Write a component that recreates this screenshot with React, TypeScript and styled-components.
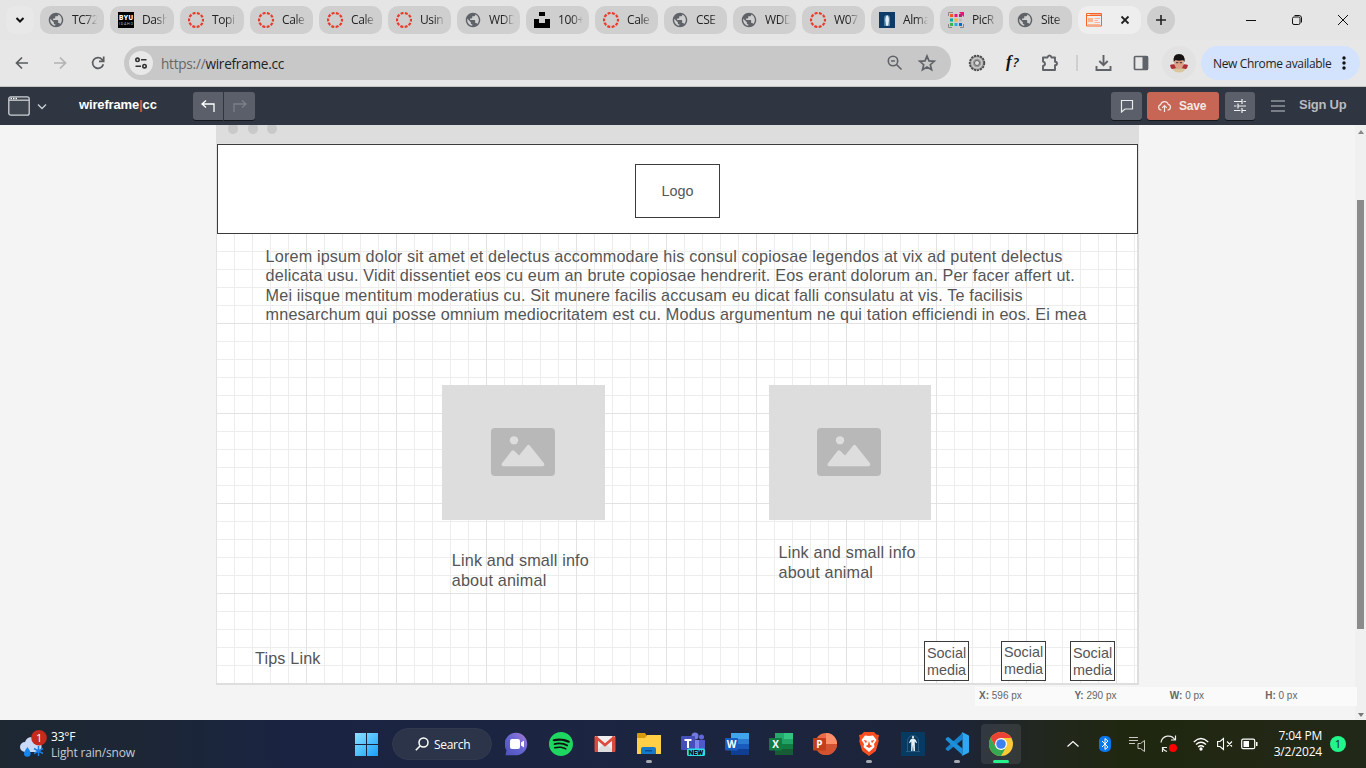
import React from "react";
import styled, { createGlobalStyle } from "styled-components";
import { SiSpotify } from "react-icons/si";

const Global = createGlobalStyle`
  * { box-sizing: border-box; }
  body { margin: 0; overflow: hidden; font-family: "Open Sans", sans-serif; }
  svg { display: block; flex: none; }
`;

const Screen = styled.div`
  width: 1366px;
  height: 768px;
  display: flex;
  flex-direction: column;
  overflow: hidden;
  background: #f4f4f4;
`;

/* ---------- browser tabs ---------- */
const TabStrip = styled.div`
  height: 40px;
  flex: none;
  display: flex;
  align-items: flex-start;
  padding: 6px 0 0 6px;
  background: #e5e5e5;
`;
const TabSearch = styled.div`
  width: 28px;
  height: 28px;
  border-radius: 9px;
  margin-right: 6px;
  background: #e8e8e8;
  display: grid;
  place-items: center;
`;
const Tab = styled.div<{ $active?: boolean; $wide?: boolean }>`
  width: ${(p) => (p.$wide ? 64 : 63)}px;
  height: 28px;
  margin-right: 6px;
  flex: none;
  border-radius: 10px;
  padding: 0 4px 0 8px;
  display: flex;
  align-items: center;
  gap: 8px;
  background: ${(p) => (p.$active ? "#eeeeee" : "#cfcfcf")};
  ${(p) => p.$active && "justify-content: space-between; padding-right: 8px;"}
`;
const TabLabel = styled.span`
  width: 27px;
  white-space: nowrap;
  font-size: 12px;
  line-height: 18px;
  letter-spacing: -0.4px;
  color: #222;
  mask-image: linear-gradient(90deg, #000 50%, transparent 94%);
`;
const NewTab = styled.div`
  width: 28px;
  height: 28px;
  border-radius: 50%;
  background: #cecece;
  display: grid;
  place-items: center;
`;
const WindowControls = styled.div`
  margin-left: auto;
  margin-right: 17px;
  height: 28px;
  display: flex;
  align-items: center;
  gap: 34px;
`;

/* ---------- address bar ---------- */
const Toolbar = styled.div`
  height: 47px;
  flex: none;
  display: flex;
  align-items: center;
  padding: 0 2px 0 14px;
  background: #e7e7e7;
  border-bottom: 1px solid #c4c4c4;
`;
const NavButtons = styled.div`
  width: 110px;
  display: flex;
  gap: 22px;
`;
const Omnibox = styled.div`
  width: 827px;
  height: 34px;
  border-radius: 17px;
  background: #c8c8c8;
  display: flex;
  align-items: center;
  padding: 0 14px 0 5px;
`;
const SiteInfo = styled.div`
  width: 24px;
  height: 24px;
  border-radius: 50%;
  background: #e8e8e8;
  display: grid;
  place-items: center;
  margin-right: 8px;
`;
const Url = styled.span`
  flex: 1;
  font-size: 13.6px;
  letter-spacing: -0.25px;
  color: #222;
  i { font-style: normal; color: #666; }
`;
const OmniActions = styled.div`
  display: flex;
  gap: 13px;
`;
const Extensions = styled.div`
  display: flex;
  align-items: center;
  margin-left: 16px;
`;
const ExtGlyph = styled.span`
  width: 20px;
  margin: 0 15px 3px 19px;
  font: italic 600 15px "Open Sans", sans-serif;
  color: #111;
  white-space: nowrap;
  i { font-family: "Liberation Serif", serif; font-size: 17px; }
  b { font-style: italic; font-weight: 600; font-size: 13px; margin-left: 1px; }
`;
const Divider = styled.div`
  width: 2px;
  height: 16px;
  margin: 0 17px;
  background: #cfcfcf;
`;
const Avatar = styled.div`
  width: 34px;
  height: 34px;
  border-radius: 50%;
  background: #e2e2e2;
  display: grid;
  place-items: center;
  margin: 0 5px 0 13px;
`;
const UpdatePill = styled.div`
  width: 159px;
  height: 34px;
  border-radius: 17px;
  background: #d3e2fd;
  display: flex;
  align-items: center;
  justify-content: space-between;
  padding: 0 14px 0 12px;
  font-size: 12px;
  letter-spacing: -0.35px;
  white-space: nowrap;
  color: #1f1f24;
`;

/* ---------- editor bar ---------- */
const EditorBar = styled.div`
  height: 38px;
  flex: none;
  background: #2f3541;
  display: flex;
  align-items: center;
  padding: 0 20px 0 8px;
  font-family: "Liberation Sans", Arial, sans-serif;
`;
const Brand = styled.div`
  width: 114px;
  margin: 0 0 3px 32px;
  font-size: 13px;
  font-weight: bold;
  letter-spacing: -0.15px;
  color: #fff;
  i { font-style: normal; color: #d8573f; }
`;
const BarButton = styled.div<{ $w: number; $save?: boolean; $corner?: string }>`
  width: ${(p) => p.$w}px;
  height: 28px;
  display: flex;
  align-items: center;
  justify-content: center;
  gap: 7px;
  background: ${(p) => (p.$save ? "#c76655" : "#5a5f69")};
  border-radius: ${(p) => p.$corner || "3px"};
  box-shadow: 0 1px 0 #15181e;
  color: #f3e9e6;
  font-size: 12px;
  font-weight: bold;
  letter-spacing: -0.2px;
  ${(p) => p.$save && "padding-right: 3px; margin: 0 6px 0 5px;"}
`;
const BarActions = styled.div`
  margin-left: auto;
  display: flex;
  align-items: center;
`;
const SignUp = styled.span`
  margin: 0 0 3px 14px;
  width: 47px;
  white-space: nowrap;
  font-size: 13px;
  letter-spacing: -0.25px;
  font-weight: bold;
  color: #b9bbc0;
`;

/* ---------- workspace ---------- */
const Workspace = styled.div`
  height: 595px;
  flex: none;
  display: flex;
  padding-left: 216px;
  position: relative;
  font-family: "Liberation Sans", Arial, sans-serif;
`;
const Page = styled.div`
  width: 923px;
  height: 560px;
  border-right: 2px solid #dedede;
  border-bottom: 2px solid #dedede;
  background: #fff;
`;
const Chrome = styled.div`
  height: 18px;
  width: 923px;
  background: #ddd;
  display: flex;
  gap: 9.5px;
  padding-left: 12px;
  overflow: hidden;
  i { width: 10px; height: 11px; margin-top: -2px; border-radius: 50%; background: #c9c9c9; }
`;
const Canvas = styled.div`
  position: relative;
  height: 540px;
  color: #555;
  background-image: linear-gradient(90deg, #e2e2e2 1px, transparent 1px),
    linear-gradient(#e2e2e2 1px, transparent 1px),
    linear-gradient(90deg, #ededed 1px, transparent 1px),
    linear-gradient(#ededed 1px, transparent 1px);
  background-size: 90px 90px, 90px 90px, 18px 18px, 18px 18px;
`;
const Shape = styled.div<{ $x: number; $y: number; $w: number; $h: number }>`
  position: absolute;
  left: ${(p) => p.$x}px;
  top: ${(p) => p.$y}px;
  width: ${(p) => p.$w}px;
  height: ${(p) => p.$h}px;
`;
const Box = styled(Shape)<{ $drop?: number }>`
  border: 1px solid #3c3c3c;
  background: #fff;
  display: grid;
  place-items: center;
  text-align: center;
  font-size: 14.4px;
  line-height: 17px;
  padding-top: ${(p) => p.$drop || 0}px;
`;
const Picture = styled(Shape)`
  background: #ddd;
  display: grid;
  place-items: center;
  padding: 0 2px 1px 0;
`;
const Copy = styled(Shape)<{ $lh: number }>`
  font-size: 16.2px;
  letter-spacing: 0.16px;
  line-height: ${(p) => p.$lh}px;
  white-space: nowrap;
`;
const ScrollTrack = styled.div`
  width: 11px;
  margin-left: auto;
  background: #f0f0f0;
  display: flex;
  flex-direction: column;
  align-items: center;
  padding: 5px 0 3px;
`;
const Thumb = styled.div`
  width: 7px;
  height: 429px;
  margin: 66px 0 auto;
  background: #8b8b8b;
`;
const Status = styled.div`
  position: absolute;
  left: 975px;
  top: 562px;
  width: 382px;
  height: 19px;
  padding-left: 4px;
  display: grid;
  grid-template-columns: repeat(4, 95.4px);
  background: #fafafa;
  font-size: 10px;
  line-height: 18px;
  color: #666;
`;

/* ---------- taskbar ---------- */
const Taskbar = styled.div`
  height: 48px;
  flex: none;
  display: flex;
  align-items: center;
  color: #fff;
  background: linear-gradient(90deg, #1d2833 0, #1c2635 140px, #1a2442 290px, #1c2540 700px, #1c2439 950px, #22271f 1040px, #20270f 1130px, #222818 1366px);
`;
const Weather = styled.div`
  display: flex;
  width: 355px;
  padding: 1px 0 0 19px;
  gap: 4px;
  align-items: center;
  font-size: 12px;
  line-height: 16px;
  letter-spacing: -0.18px;
  span { display: block; color: #c6cbd3; }
`;
const SearchBox = styled.div`
  width: 100px;
  height: 32px;
  margin: 0 3px 0 13px;
  border-radius: 16px;
  background: #2b3449;
  border: 1px solid #30394d;
  display: flex;
  align-items: center;
  gap: 5px;
  padding-left: 22px;
  font-size: 12px;
  letter-spacing: -0.3px;
`;
const App24 = styled.div<{ $mark?: string; $active?: boolean }>`
  width: 40px;
  height: 40px;
  margin: 0 2px;
  flex: none;
  border-radius: 4px;
  display: flex;
  flex-direction: column;
  align-items: center;
  padding-top: 8px;
  background: ${(p) => (p.$active ? "rgba(255,255,255,.09)" : "none")};
  &::after {
    content: "";
    width: ${(p) => (p.$active ? 16 : 6)}px;
    height: 3px;
    margin-top: 4px;
    border-radius: 2px;
    background: ${(p) => p.$mark || "none"};
  }
`;
const Tray = styled.div`
  display: flex;
  align-items: center;
  margin-left: auto;
  padding-right: 20px;
`;
const Spaced = styled.div<{ $before: number }>`
  margin-left: ${(p) => p.$before}px;
`;
const Clock = styled.div`
  width: 61px;
  margin: 0 0 0 3px;
  text-align: right;
  font-size: 12px;
  line-height: 16px;
  letter-spacing: -0.2px;
  white-space: nowrap;
`;
const Notice = styled.div`
  width: 16px;
  height: 16px;
  margin-left: 8px;
  border-radius: 50%;
  background: #22f58a;
  color: #123;
  font-size: 11px;
  line-height: 16px;
  text-align: center;
`;

const Globe = () => (
  <svg width="16" height="16" viewBox="1 1 22 22">
    <path fill="#5f6368" d="M12 2C6.480 2 2 6.480 2 12s4.480 10 10 10 10-4.480 10-10S17.520 2 12 2zm-1 17.930c-3.950-.490-7-3.850-7-7.930 0-.620.080-1.210.210-1.790L9 15v1c0 1.100.9 2 2 2v1.930zm6.900-2.540c-.260-.810-1-1.390-1.900-1.390h-1v-3c0-.550-.450-1-1-1H8v-2h2c.550 0 1-.450 1-1V7h2c1.100 0 2-.9 2-2v-.410c2.930 1.190 5 4.060 5 7.410 0 2.080-.8 3.970-2.100 5.390z" />
  </svg>
);
const CanvasRing = () => (
  <svg width="16" height="16" viewBox="0 0 16 16">
    <circle cx="8" cy="8" r="7" fill="none" stroke="#ea3c2b" strokeWidth="2.200" strokeDasharray="3 1.398" strokeDashoffset="1.500" />
  </svg>
);
const Byu = () => (
  <svg width="16" height="16" viewBox="0 0 16 16">
    <rect width="16" height="16" />
    <text x="1" y="8" fontFamily="Roboto" fontWeight="900" fontSize="6.8" fill="#fff" textLength="14">BYU</text>
    <text x="1" y="12.5" fontFamily="Roboto" fontSize="3.7" fill="#bbb" textLength="14">IDAHO</text>
  </svg>
);
const Unsplash = () => (
  <svg width="16" height="16" viewBox="0 0 16 16"><path d="M5 0h6v4H5zM0 7h5v4h6V7h5v9H0z" /></svg>
);
const Temple = () => (
  <svg width="16" height="16" viewBox="0 0 24 24">
    <rect width="24" height="24" fill="#0b3b66" />
    <path d="M7.500 21V9a4.500 4.500 0 0 1 9 0v12z" fill="#4f7fa3" />
    <path d="M12 4.500q3 2 3 7l-1.200 9h-3L9.500 12q0-5 2.500-7.500" fill="#e6f0f5" />
  </svg>
);
const TempleApp = () => (
  <svg width="24" height="24" viewBox="0 0 24 24">
    <rect width="24" height="24" fill="#073a60" />
    <path d="M6.500 19.500V9a5.500 5.500 0 0 1 11 0v10.500M5 19.500h14" fill="none" stroke="#34658a" strokeWidth=".8" />
    <circle cx="12" cy="5.200" r="1.100" fill="#e6f0f5" />
    <path d="M11.200 6.500h1.600l1.900 1.200 1.300 3-.7.500-1.500-1.700.2 9.500h-1.600L12 13l-.6 6h-1.300l.2-9.500-1.500 1.700-.7-.5 1.200-3z" fill="#e6f0f5" />
  </svg>
);
const PicResize = () => (
  <svg width="16" height="16" viewBox="0 0 16 16">
    <path d="M.5 4V.5H5M.5 12v3.500H4M15.500 12v3.500H12" fill="none" stroke="#888" />
    <path d="M2 2h3v3H2z" fill="#f15a24" /><path d="M6.500 2h3v3h-3zM11 0h5v5l-5-5z" fill="#ed1277" /><path d="M11 2h3v3h-3z" fill="#b71f71" />
    <path d="M2 6.500h3v3H2z" fill="#00a8a0" /><path d="M6.500 6.500h3v3h-3z" fill="#fbb03b" /><path d="M11 6.500h3v3h-3z" fill="#bbb" />
    <path d="M2 11h3v3H2z" fill="#3fb549" /><path d="M6.500 11h3v3h-3z" fill="#29abe2" /><path d="M11 11h3v3h-3z" fill="#0071bc" />
  </svg>
);
const WireIcon = () => (
  <svg width="16" height="14" viewBox="0 0 16 14">
    <path d="M.5.500h15v12.500H.5zM0 2.500h16" fill="none" stroke="#fa6428" />
    <path d="M4 1h11" stroke="#fa6428" /><path d="M2 5h5v4H2z" fill="#fbb592" />
    <path d="M8.500 5.500H14M8.500 7.500H12M8.500 9.500H14M2 11.500h12" stroke="#fbb592" />
  </svg>
);

const tabs: [React.FC, string][] = [
  [Globe, "TC72"], [Byu, "Dash"], [CanvasRing, "Topi"], [CanvasRing, "Cale"], [CanvasRing, "Cale"],
  [CanvasRing, "Usin"], [Globe, "WDD"], [Unsplash, "100+"], [CanvasRing, "Cale"], [Globe, "CSE"],
  [Globe, "WDD"], [CanvasRing, "W07"], [Temple, "Alma"], [PicResize, "PicR"], [Globe, "Site"],
];

const Mountain = () => (
  <svg width="64" height="48" viewBox="0 0 64 49" preserveAspectRatio="none">
    <rect width="64" height="49" rx="4" fill="#b8b8b8" />
    <circle cx="23" cy="12.500" r="4.200" fill="#ddd" />
    <path d="M12 39q-2.500-1-1-3l9.500-12.500q1.500-1.600 3 0l4.500 4.500 8-10q1.500-1.600 3 0l14 18q1 2-1 3z" fill="#ddd" />
  </svg>
);

const Office = ({ letter, c }: { letter: string; c: string[] }) => (
  <svg width="24" height="24" viewBox="0 0 24 24">
    {letter === "P" ? (
      <>
        <circle cx="13" cy="12" r="11" fill={c[1]} />
        <path d="M13 1a11 11 0 0 1 11 11H13z" fill={c[0]} />
        <path d="M2 12h22a11 11 0 0 1-22 0z" fill={c[2]} />
      </>
    ) : (
      <>
        <path d="M6 1h18v6H6z" fill={c[0]} /><path d="M6 7h18v5H6z" fill={c[1]} />
        <path d="M6 12h18v5H6z" fill={c[2]} /><path d="M6 17h18v6H6z" fill={c[3]} />
        {letter === "X" && <path d="M6 1h9v11H6z" fill="#21a366" opacity=".8" />}
      </>
    )}
    <rect y="6" width="13" height="12.500" rx="1" fill={c[4]} />
    <text x="6.500" y="16" textAnchor="middle" fontFamily="Open Sans" fontWeight="700" fontSize="10" fill="#fff">{letter}</text>
  </svg>
);

export default function App() {
  return (
    <Screen>
      <Global />
      <TabStrip>
        <TabSearch>
          <svg width="10" height="8" viewBox="0 0 10 8"><path d="M1.500 2 5 5.500 8.500 2" fill="none" stroke="#111" strokeWidth="2" /></svg>
        </TabSearch>
        {tabs.map(([Icon, label], i) => (
          <Tab key={i} $wide={i < 3}><Icon /><TabLabel>{label}</TabLabel></Tab>
        ))}
        <Tab $active>
          <WireIcon />
          <svg width="16" height="16" viewBox="0 0 16 16"><path d="m4.500 4.500 7 7m0-7-7 7" stroke="#222" strokeWidth="1.800" /></svg>
        </Tab>
        <NewTab><svg width="10" height="10" viewBox="0 0 10 10"><path d="M5 0v10M0 5h10" stroke="#222" strokeWidth="1.600" /></svg></NewTab>
        <WindowControls>
          <svg width="12" height="12"><path d="M1 6.500h10" stroke="#111" /></svg>
          <svg width="12" height="12" viewBox="0 0 12 12" fill="none" stroke="#111"><rect x="1.500" y="3" width="7.500" height="7.500" rx="1.500" /><path d="M3.500 1.500H8q2.500 0 2.500 2.500v4.500" /></svg>
          <svg width="12" height="12" viewBox="0 0 12 12"><path d="m1 1 10 10m0-10L1 11" stroke="#111" /></svg>
        </WindowControls>
      </TabStrip>

      <Toolbar>
        <NavButtons>
          <svg width="16" height="16" viewBox="0 0 16 16" fill="none" stroke="#5a5d61" strokeWidth="1.700"><path d="M14 8H3M8 2.500 2.500 8 8 13.500" /></svg>
          <svg width="16" height="16" viewBox="0 0 16 16" fill="none" stroke="#b3b3b3" strokeWidth="1.700"><path d="M2 8h11M8 2.500 13.500 8 8 13.500" /></svg>
          <svg width="16" height="16" viewBox="0 0 16 16" fill="none" stroke="#5a5d61" strokeWidth="1.700"><path d="M13.300 9.200A5.400 5.400 0 1 1 12 4.300l1.500 1.500M13.700 1.500v4.800H9" /></svg>
        </NavButtons>
        <Omnibox>
          <SiteInfo>
            <svg width="14" height="14" viewBox="0 0 14 14" fill="none" stroke="#333" strokeWidth="1.600"><circle cx="3.500" cy="3.800" r="1.700" /><path d="M7 3.800h5.500M1.500 10.200H7" /><circle cx="10.500" cy="10.200" r="1.700" /></svg>
          </SiteInfo>
          <Url><i>https://</i>wireframe.cc</Url>
          <OmniActions>
            <svg width="18" height="18" viewBox="0 0 18 18" fill="none" stroke="#5f6368" strokeWidth="1.600"><circle cx="7" cy="7" r="4.700" /><path d="m10.500 10.500 5 5M5 7h4" /></svg>
            <svg width="20" height="18" viewBox="0 0 20 18" fill="none" stroke="#5f6368" strokeWidth="1.700"><path d="m10 2 2 4.900 5.300.4-4 3.400 1.300 5.100-4.600-2.800-4.500 2.800 1.200-5.100-4-3.400 5.300-.4z" /></svg>
          </OmniActions>
        </Omnibox>
        <Extensions>
          <svg width="20" height="20" viewBox="0 0 20 20">
            <circle cx="10" cy="10" r="7.300" fill="#9a9a9a" stroke="#4c4c4c" strokeWidth="1.800" strokeDasharray="2.300 .8" />
            <circle cx="10" cy="10" r="5" fill="none" stroke="#c9c9c9" strokeWidth="1.500" /><circle cx="10" cy="10" r="2.500" fill="#ddd" stroke="#666" />
          </svg>
          <ExtGlyph><i>f</i><b>?</b></ExtGlyph>
          <svg width="18" height="18" viewBox="0 0 18 18" fill="none" stroke="#5f6368" strokeWidth="1.900"><path d="M2 3.500h4.500q.5-2 2-2t2 2H14v4.200q2 .2 2 1.800t-2 1.800V16H2v-4q2-.4 2-2.200T2 7.500z" strokeLinejoin="round" /></svg>
          <Divider />
          <svg width="18" height="18" viewBox="0 0 18 18" fill="none" stroke="#5f6368" strokeWidth="1.900"><path d="M8.500 1v10M4.300 7l4.200 4.200L12.700 7M1.500 12v4h14v-4" /></svg>
        </Extensions>
        <Spaced $before={20}>
          <svg width="16" height="16" viewBox="0 0 16 16"><rect x="1.500" y="1.500" width="13" height="13" rx="1" fill="none" stroke="#5f6368" strokeWidth="1.700" /><path d="M9.500 1H15v14H9.500z" fill="#5f6368" /></svg>
        </Spaced>
        <Avatar>
          <svg width="20" height="20" viewBox="0 0 20 20">
            <circle cx="10" cy="10" r="9.500" fill="#e6e2df" /><path d="M1 12q4-2 9 1 5-3 9-1-.5 3-2 4H3q-1.500-1-2-4" fill="#ad2f37" />
            <path d="M3.500 16q6.500-2 13 0-2 3.500-6.500 3.500T3.500 16" fill="#d8c69c" /><ellipse cx="10" cy="10" rx="4.800" ry="6" fill="#dba287" /><path d="M4.800 9Q3.500 1 10 1t5.500 8l-1.500-2q-4 1.500-7.500 0z" fill="#171313" />
            <path d="M7 9.700h2.300M10.800 9.700H13" stroke="#4b2a22" />
          </svg>
        </Avatar>
        <UpdatePill>New Chrome available
          <svg width="4" height="16"><g fill="#111"><circle cx="2" cy="3" r="1.700" /><circle cx="2" cy="8" r="1.700" /><circle cx="2" cy="13" r="1.700" /></g></svg>
        </UpdatePill>
      </Toolbar>

      <EditorBar>
        <svg width="39" height="20" viewBox="0 0 39 20" fill="none" stroke="#cdd0d5" strokeWidth="1.300">
          <rect x=".8" y=".8" width="20.400" height="18.400" rx="2" fill="#3f454f" /><path d="M1 4.200h20" /><path d="M2.500 2.500h7" stroke="#fff" strokeDasharray="1.500 1" /><path d="m30 8.500 4 4 4-4" />
        </svg>
        <Brand>wireframe<i>|</i>cc</Brand>
        <BarButton $w={30} $corner="3px 0 0 3px">
          <svg width="16" height="16" viewBox="0 0 16 16" fill="none" stroke="#fff" strokeWidth="1.300"><path d="M6 2.500 2 6l4 3.500M2 6h12v8" /></svg>
        </BarButton>
        <Spaced $before={1}>
          <BarButton $w={31} $corner="0 3px 3px 0">
            <svg width="16" height="16" viewBox="0 0 16 16" fill="none" stroke="#7c8088" strokeWidth="1.300"><path d="m10 2.500 4 3.500-4 3.500M14 6H2v8" /></svg>
          </BarButton>
        </Spaced>
        <BarActions>
          <BarButton $w={31}>
            <svg width="14" height="14" viewBox="0 0 14 14" fill="none" stroke="#e9eaec" strokeWidth="1.200"><path d="M1.500 1.500h11v8.500H5L1.500 13z" /></svg>
          </BarButton>
          <BarButton $w={72} $save>
            <svg width="15" height="14" viewBox="0 0 14 14" fill="none" stroke="#f6e7e3" strokeWidth="1.200"><path d="M4 11H3.500a2.700 2.700 0 0 1-.3-5.300 3.900 3.900 0 0 1 7.500-.4A2.900 2.900 0 0 1 10.500 11H10M7 13V6.500M4.700 8.800 7 6.500l2.300 2.300" /></svg>
            Save
          </BarButton>
          <BarButton $w={30}>
            <svg width="14" height="14" viewBox="0 0 14 14" fill="none" stroke="#f0f0f2" strokeWidth="1.200"><path d="M1 2.500h7.500M10.500 2.500H13M1 7h2.500M5.500 7H13M1 11.500h6.500M9.500 11.500H13M9 0v5M5 4.500v5M9 9v5" /></svg>
          </BarButton>
          <Spaced $before={16}>
            <svg width="14" height="12" viewBox="0 0 14 12" stroke="#c3c5ca" strokeWidth="1.200"><path d="M0 1h14M0 6h14M0 11h14" /></svg>
          </Spaced>
          <SignUp>Sign Up</SignUp>
        </BarActions>
      </EditorBar>

      <Workspace>
        <Page>
          <Chrome><i /><i /><i /></Chrome>
          <Canvas>
            <Box $x={1} $y={1} $w={921} $h={90} />
            <Box $x={419} $y={21} $w={85} $h={54}>Logo</Box>
            <Copy $x={49.6} $y={104} $w={830} $h={78} $lh={19.3}>
              Lorem ipsum dolor sit amet et delectus accommodare his consul copiosae legendos at vix ad putent delectus<br />
              delicata usu. Vidit dissentiet eos cu eum an brute copiosae hendrerit. Eos erant dolorum an. Per facer affert ut.<br />
              Mei iisque mentitum moderatius cu. Sit munere facilis accusam eu dicat falli consulatu at vis. Te facilisis<br />
              mnesarchum qui posse omnium mediocritatem est cu. Modus argumentum ne qui tation efficiendi in eos. Ei mea
            </Copy>
            <Picture $x={226} $y={242} $w={163} $h={135}><Mountain /></Picture>
            <Picture $x={553} $y={242} $w={162} $h={135}><Mountain /></Picture>
            <Copy $x={235.8} $y={407} $w={150} $h={40} $lh={20}>Link and small info<br />about animal</Copy>
            <Copy $x={562.5} $y={399} $w={150} $h={40} $lh={20}>Link and small info<br />about animal</Copy>
            <Copy $x={39} $y={505} $w={100} $h={20} $lh={20}>Tips Link</Copy>
            <Box $x={708} $y={498} $w={45} $h={40} $drop={2}><span>Social<br />media</span></Box>
            <Box $x={785} $y={498} $w={45} $h={40}><span>Social<br />media</span></Box>
            <Box $x={854} $y={498} $w={45} $h={40} $drop={2}><span>Social<br />media</span></Box>
          </Canvas>
        </Page>
        <ScrollTrack>
          <svg width="6" height="4"><path d="M0 4l3-4 3 4z" fill="#888" /></svg>
          <Thumb />
          <svg width="6" height="4"><path d="M0 0l3 4 3-4z" fill="#777" /></svg>
        </ScrollTrack>
        <Status>
          <span><b>X:</b> 596 px</span><span><b>Y:</b> 290 px</span><span><b>W:</b> 0 px</span><span><b>H:</b> 0 px</span>
        </Status>
      </Workspace>

      <Taskbar>
        <Weather>
          <svg width="28" height="30" viewBox="0 0 28 30">
            <path d="M6 22a5 5 0 0 1 0-10 7 7 0 0 1 13-1 6 6 0 0 1 0 11z" fill="#c9daf8" />
            <path d="M8.500 17q-3.500 4.500-3.500 6.500a3.300 3.300 0 0 0 6.600 0Q11.500 21 8.500 17" fill="#1686ee" />
            <path d="M19.500 16v10M15 18.500l9 5M24 18.500l-9 5" stroke="#1b7ee0" strokeWidth="1.500" />
            <circle cx="20" cy="7.800" r="7.800" fill="#c42b1c" /><text x="20" y="12" textAnchor="middle" fontFamily="Open Sans" fontSize="11" fill="#fff">1</text>
          </svg>
          <div>33°F<span>Light rain/snow</span></div>
        </Weather>
        <svg width="24" height="24" viewBox="0 0 24 24">
          <defs><linearGradient id="win" x1="0" y1="0" x2="1" y2="1"><stop stopColor="#8be1ff" /><stop offset="1" stopColor="#18a0fb" /></linearGradient></defs>
          <path d="M0 1h11v11H0zM12 1h11v11H12zM0 13h11v11H0zM12 13h11v11H12z" fill="url(#win)" />
        </svg>
        <SearchBox>
          <svg width="14" height="14" viewBox="0 0 14 14" fill="none" stroke="#fff" strokeWidth="1.500"><circle cx="8.500" cy="5.500" r="4.500" /><path d="M5 9 .8 13.200" /></svg>
          Search
        </SearchBox>
        <App24>
          <svg width="24" height="24" viewBox="0 0 24 24"><defs><linearGradient id="chat" x1="1" y1="0" x2="0" y2="1"><stop stopColor="#a77bd5" /><stop offset=".5" stopColor="#6465d2" /><stop offset="1" stopColor="#4e50bd" /></linearGradient></defs>
            <path d="M.5 23.300l1-5A11.300 11.300 0 1 1 12 23.300z" fill="url(#chat)" /><rect x="5" y="7" width="10" height="10" rx="2" fill="#fff" /><path d="m16 10.500 3-2v7l-3-2z" fill="#fff" /></svg>
        </App24>
        <App24><svg width="24" height="24" viewBox="0 0 24 24"><circle cx="12" cy="12" r="11" fill="#111" /><SiSpotify size={24} color="#1ed760" /></svg></App24>
        <App24>
          <svg width="24" height="24" viewBox="0 0 24 24"><path d="M2 4h20v16H2z" fill="#eee" /><path d="m2 20 10-9 10 9z" fill="#ddd" /><path d="M1.500 4.500H5v15.500H3q-1.500 0-1.500-1.500zM19 4.500h3.500v14q0 1.500-1.500 1.500h-2z" fill="#d54b3d" /><path d="m2.500 5 9.500 8 9.500-8" fill="none" stroke="#dd4b3e" strokeWidth="2.800" /></svg>
        </App24>
        <App24 $mark="#a5a9b2">
          <svg width="24" height="24" viewBox="0 0 24 24"><path d="M0 2q0-1 1-1h7l2 3h-1v3H0z" fill="#d89b0b" /><path d="M0 6h8l2-3h14v19H0z" fill="#ffcf48" /><path d="M4 22v-5q0-2 2-2h11q2 0 2 2v5z" fill="#1878ca" /><path d="M8 18h7v1.500H8z" fill="#075090" /></svg>
        </App24>
        <App24>
          <svg width="24" height="24" viewBox="0 0 24 24"><circle cx="14" cy="4" r="3.500" fill="#7379df" /><circle cx="20.500" cy="5" r="2.500" fill="#6269d6" /><path d="M8 8h10v12H8z" fill="#7b83eb" /><path d="M18 8h6v9h-6z" fill="#5059c9" /><rect y="4" width="14" height="14" rx="1" fill="#464eb8" /><path d="M3.500 8h7M7 8v8" stroke="#fff" strokeWidth="2" /><rect x="6" y="16.500" width="18" height="7.500" rx="1.500" fill="#2ae0e8" /><text x="15" y="23" textAnchor="middle" fontFamily="Roboto" fontWeight="900" fontSize="7" fill="#111">NEW</text></svg>
        </App24>
        <App24><Office letter="W" c={["#41a5ee", "#2b7cd3", "#185abd", "#103f91", "#185abd"]} /></App24>
        <App24><Office letter="X" c={["#33c481", "#21a366", "#107c41", "#185c37", "#107c41"]} /></App24>
        <App24><Office letter="P" c={["#ff8f6b", "#ed6c47", "#d35230", "", "#c43e1c"]} /></App24>
        <App24 $mark="#a5a9b2">
          <svg width="24" height="24" viewBox="0 0 24 24"><path d="M7 0h10l2.500 2.500 2.500.5-.8 4 .6 2-3 10L12 24l-6.800-5-3-10 .6-2L2 3l2.500-.5z" fill="#f94f20" /><path d="m12 4 4-.5L19.500 8l-2.500 4 .5 3-5.500 5-5.500-5 .5-3-2.500-4L8 3.500z" fill="#fff" /><path d="m6.500 8 3.500.7-1 2.500zM17.500 8l-3.500.7 1 2.500zM12 9l1.200 4 2.300 1-3.500 2-3.500-2 2.300-1z" fill="#f94f20" /></svg>
        </App24>
        <App24><TempleApp /></App24>
        <App24 $mark="#a5a9b2">
          <svg width="24" height="24" viewBox="0 0 24 24"><path d="M1.500 15.500 17.500 1v6.500L4 18.500q-1 .8-2 0L.8 17.500q-.8-1 .7-2" fill="#1683cc" /><path d="M1.500 8.500 17.500 23v-6.500L4 5.500q-1-.8-2 0L.8 6.500q-.8 1 .7 2" fill="#1b91dc" /><path d="m17.500.3 6 3q.5.300.5 1v15.400q0 .7-.5 1l-6 3-1.300-1.200q1.300.5 1.300-1V2.500q0-1.500-1.300-1z" fill="#2ca9f2" /></svg>
        </App24>
        <App24 $active $mark="#24f28b">
          <svg width="24" height="24" viewBox="0 0 24 24"><circle cx="12" cy="12" r="12" fill="#fcc934" /><path d="M1.600 6A12 12 0 0 1 22.400 6H12L6.800 15z" fill="#ea4335" /><path d="M1.600 6A12 12 0 0 0 12 24l5.200-9-5.200 3-5.200-3z" fill="#34a853" /><circle cx="12" cy="12" r="6" fill="#fff" /><circle cx="12" cy="12" r="4.800" fill="#3b82f0" /></svg>
        </App24>
        <Tray>
          <svg width="12" height="8" viewBox="0 0 12 8"><path d="m.5 6.500 5.500-5 5.500 5" fill="none" stroke="#fff" strokeWidth="1.200" /></svg>
          <Spaced $before={20}><svg width="12" height="16" viewBox="0 0 12 16"><rect width="12" height="16" rx="5" fill="#0877ea" /><path d="m3 5 6 6-3 2.500v-11L9 5l-6 6" fill="none" stroke="#fff" /></svg></Spaced>
          <Spaced $before={18}><svg width="18" height="16" viewBox="0 0 18 16" fill="none" stroke="#c7c9c2"><path d="M0 1.500h9M0 4.500h9M0 7.500h6M9 7.500h2.500l4-3v11l-4-3H9z" /></svg></Spaced>
          <Spaced $before={13}><svg width="18" height="18" viewBox="0 0 18 18" fill="none" stroke="#eee" strokeWidth="1.200"><path d="M1 7.500A7.500 7.500 0 0 1 15 5M15.500.5V5H11M7 16.500a7.500 7.500 0 0 1-4.500-3.500M2.500 17v-4.500H7" /><circle cx="13" cy="13" r="4" fill="red" stroke="none" /></svg></Spaced>
          <Spaced $before={15}><svg width="16" height="14" viewBox="0 0 16 14" fill="none" stroke="#fff" strokeWidth="1.300"><path d="M.8 5q7.200-7 14.400 0M3 7.500q5-4.500 10 0M5 10q3-2.500 6 0" /><circle cx="8" cy="12" r="1" fill="#fff" /></svg></Spaced>
          <Spaced $before={8}><svg width="16" height="14" viewBox="0 0 16 14" fill="none" stroke="#fff" strokeWidth="1.100"><path d="M.6 4.500H3l3.500-3v11L3 9.500H.6zM10 4.500l5 5M15 4.500l-5 5" /></svg></Spaced>
          <Spaced $before={8}><svg width="17" height="12" viewBox="0 0 17 12"><rect x=".7" y="1.200" width="13" height="9.500" rx="1.500" fill="none" stroke="#fff" strokeWidth="1.200" /><path d="M2.500 3H8v6H2.500zM15 4h1.500v4H15z" fill="#fff" /></svg></Spaced>
          <Clock>7:04 PM<br />3/2/2024</Clock>
          <Notice>1</Notice>
        </Tray>
      </Taskbar>
    </Screen>
  );
}
